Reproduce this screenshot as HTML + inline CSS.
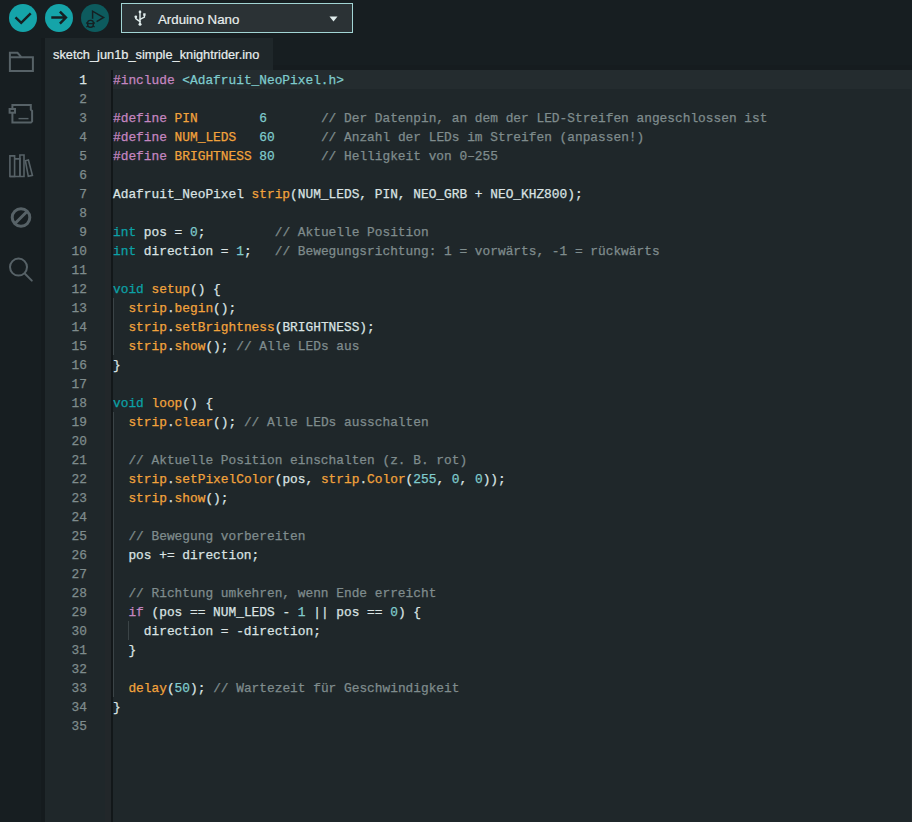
<!DOCTYPE html>
<html><head><meta charset="utf-8">
<style>
html,body{margin:0;padding:0;width:912px;height:822px;overflow:hidden;background:#171e21;}
#toolbar{position:absolute;left:0;top:0;width:912px;height:38px;background:#171e21;}
#side{position:absolute;left:0;top:38px;width:44px;height:784px;background:#171e21;}
#sidesep{position:absolute;left:41px;top:38px;width:4px;height:784px;background:#151b1e;}
#tabbar{position:absolute;left:45px;top:38px;width:867px;height:32px;background:#171e21;}
#tab{position:absolute;left:45px;top:38px;width:228px;height:32px;background:#1f272a;}
#tab span{position:absolute;left:8px;top:9px;-webkit-text-stroke:0.2px currentColor;font-family:"Liberation Sans",sans-serif;font-size:12.8px;color:#e8eeee;white-space:pre;}
#editor{position:absolute;left:45px;top:70px;width:867px;height:752px;background:#1f272a;}
#hl{position:absolute;left:113px;top:70px;width:799px;height:19px;background:#242c2f;}
#gline{position:absolute;left:111px;top:70px;width:2px;height:752px;background:#121719;}
.guide{position:absolute;width:1px;background:#3b4447;}
#nums{position:absolute;left:44px;top:71px;-webkit-text-stroke:0.25px currentColor;width:43px;font-family:"Liberation Mono",monospace;font-size:12.83px;line-height:19px;color:#7f8c8d;text-align:right;white-space:pre;}
#nums .a{color:#dae3e3;}
#code{position:absolute;left:113px;top:71px;-webkit-text-stroke:0.25px currentColor;font-family:"Liberation Mono",monospace;font-size:12.83px;line-height:19px;color:#dae3e3;white-space:pre;}
.k{color:#0ca1a6;}  /* int void */
.p{color:#c586c0;}  /* #include #define if */
.f{color:#f2a33c;}  /* functions, macros */
.n{color:#7fcbcd;}  /* numbers, strings */
.c{color:#7f8c8d;}  /* comments */
.dd{position:absolute;left:121px;top:3px;width:230px;height:28px;border:1px solid #a2d5d4;background:#2b3235;}
.dd span{position:absolute;left:36px;top:8px;-webkit-text-stroke:0.2px currentColor;font-family:"Liberation Sans",sans-serif;font-size:13.3px;color:#e8eeee;}
</style></head><body>
<div id="toolbar"></div>
<svg style="position:absolute;left:0;top:0" width="120" height="38">
  <circle cx="23" cy="18" r="14" fill="#15a4a9"/>
  <path d="M15.5 17.3 L21.2 22.8 L30.7 13.3" fill="none" stroke="#152023" stroke-width="2.5"/>
  <circle cx="59" cy="18" r="14" fill="#15a4a9"/>
  <path d="M51.3 17.6 H66 M59.9 11.6 L65.9 17.6 L59.9 23.6" fill="none" stroke="#152023" stroke-width="2.5"/>
  <circle cx="95" cy="18" r="14" fill="#0d5b5e"/>
  <path d="M92.6 18.8 V11.2 L103.6 17.5 L96.6 21.6" fill="none" stroke="#152023" stroke-width="1.5"/>
  <g fill="none" stroke="#152023" stroke-width="1.4">
    <rect x="87.7" y="20.4" width="5.6" height="6.8" rx="2.4"/>
    <path d="M87.7 23.6 H93.3 M86.2 22.6 L87.7 23.6 M94.8 22.6 L93.3 23.6 M86.4 27 L88 26 M94.6 27 L93 26"/>
  </g>
</svg>
<div class="dd">
  <svg style="position:absolute;left:11px;top:5px" width="16" height="18" viewBox="133 9 16 18">
    <g fill="none" stroke="#e0ecec" stroke-width="1.4" stroke-linecap="round">
      <path d="M140 11.5 V24"/>
      <path d="M135.8 16.8 V18.6 L140 21.6"/>
      <path d="M144.4 15 V17 L140 19.3"/>
    </g>
    <g fill="#e0ecec">
      <circle cx="140" cy="11.9" r="1.35"/>
      <circle cx="140" cy="24.2" r="1.5"/>
      <circle cx="135.8" cy="16.8" r="1.4"/>
      <rect x="143.2" y="13.3" width="2.4" height="2.4"/>
    </g>
  </svg>
  <span>Arduino Nano</span>
  <svg style="position:absolute;left:207px;top:12px" width="10" height="7"><path d="M0.5 0.5 H8.5 L4.5 5.5 Z" fill="#e0ecec"/></svg>
</div>
<div id="side"></div>
<div id="sidesep"></div>
<svg style="position:absolute;left:0;top:38px" width="44" height="260" viewBox="0 38 44 260">
  <g fill="none" stroke="#576267" stroke-width="2">
    <path d="M9.9 57.3 V71 H32.9 V57.3 H21.5 L17.5 52.8 H9.9 V57.3 H21.5"/>
    <path d="M12.4 105.1 H30.8 V109.7 L32.1 111 V121.4 L30.9 122.6 H12.4 Z"/>
    <rect x="9.6" y="109" width="5.4" height="3.7" fill="#171e21"/>
    <path d="M18.5 118.6 H28.5" stroke-width="1.4"/>
  </g>
  <g fill="none" stroke="#576267" stroke-width="1.6">
    <path d="M9.9 176.5 V155.9 H14.6 V176.5 Z"/>
    <path d="M14.6 158.9 H19.9 V176.5"/>
    <path d="M19.9 176.5 V155 H24 V176.5 H9.9"/>
    <path d="M25.4 160.8 L28.4 160 L32.4 175.3 L28.3 176.3 Z"/>
  </g>
  <g fill="none" stroke="#576267">
    <circle cx="21" cy="217.5" r="8.8" stroke-width="3"/>
    <path d="M27 211.5 L15 223.5" stroke-width="3"/>
    <circle cx="18.5" cy="267.1" r="8.5" stroke-width="2"/>
    <path d="M25 273.8 L31.8 280.6" stroke-width="2" stroke-linecap="round"/>
  </g>
</svg>
<div id="tabbar"></div>
<div style="position:absolute;left:273px;top:65px;width:639px;height:5px;background:#161c1f"></div>
<div id="tab"><span>sketch_jun1b_simple_knightrider.ino</span></div>
<div id="editor"></div>
<div id="hl"></div>
<div style="position:absolute;left:105px;top:70px;width:6px;height:752px;background:#22272a"></div>
<div id="gline"></div>
<div style="position:absolute;left:911px;top:70px;width:1px;height:752px;background:#252c2f"></div>
<div class="guide" style="left:113px;top:298px;height:57px"></div>
<div class="guide" style="left:113px;top:412px;height:285px"></div>
<div class="guide" style="left:128px;top:621px;height:19px"></div>
<div id="nums"><span class="a">1</span>
2
3
4
5
6
7
8
9
10
11
12
13
14
15
16
17
18
19
20
21
22
23
24
25
26
27
28
29
30
31
32
33
34
35</div>
<div id="code"><span class="p">#include</span> <span class="n">&lt;Adafruit_NeoPixel.h&gt;</span>

<span class="p">#define</span> <span class="f">PIN</span>        <span class="n">6</span>       <span class="c">// Der Datenpin, an dem der LED-Streifen angeschlossen ist</span>
<span class="p">#define</span> <span class="f">NUM_LEDS</span>   <span class="n">60</span>      <span class="c">// Anzahl der LEDs im Streifen (anpassen!)</span>
<span class="p">#define</span> <span class="f">BRIGHTNESS</span> <span class="n">80</span>      <span class="c">// Helligkeit von 0–255</span>

Adafruit_NeoPixel <span class="f">strip</span>(NUM_LEDS, PIN, NEO_GRB + NEO_KHZ800);

<span class="k">int</span> pos = <span class="n">0</span>;         <span class="c">// Aktuelle Position</span>
<span class="k">int</span> direction = <span class="n">1</span>;   <span class="c">// Bewegungsrichtung: 1 = vorwärts, -1 = rückwärts</span>

<span class="k">void</span> <span class="f">setup</span>() {
  <span class="f">strip</span>.<span class="f">begin</span>();
  <span class="f">strip</span>.<span class="f">setBrightness</span>(BRIGHTNESS);
  <span class="f">strip</span>.<span class="f">show</span>(); <span class="c">// Alle LEDs aus</span>
}

<span class="k">void</span> <span class="f">loop</span>() {
  <span class="f">strip</span>.<span class="f">clear</span>(); <span class="c">// Alle LEDs ausschalten</span>

  <span class="c">// Aktuelle Position einschalten (z. B. rot)</span>
  <span class="f">strip</span>.<span class="f">setPixelColor</span>(pos, <span class="f">strip</span>.<span class="f">Color</span>(<span class="n">255</span>, <span class="n">0</span>, <span class="n">0</span>));
  <span class="f">strip</span>.<span class="f">show</span>();

  <span class="c">// Bewegung vorbereiten</span>
  pos += direction;

  <span class="c">// Richtung umkehren, wenn Ende erreicht</span>
  <span class="p">if</span> (pos == NUM_LEDS - <span class="n">1</span> || pos == <span class="n">0</span>) {
    direction = -direction;
  }

  <span class="f">delay</span>(<span class="n">50</span>); <span class="c">// Wartezeit für Geschwindigkeit</span>
}
</div>
</body></html>
